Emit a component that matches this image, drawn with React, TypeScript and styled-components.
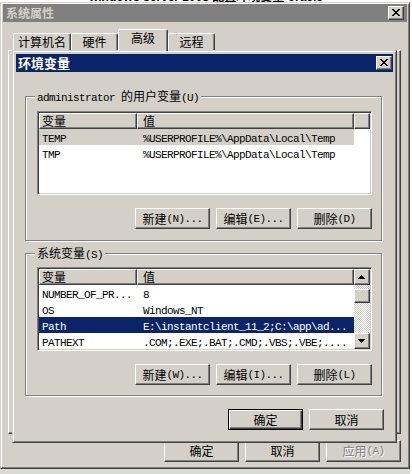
import React from "react";
import styled, { createGlobalStyle, css } from "styled-components";

const FACE = "#d4d0c8";
const SHADOW = "#808080";
const DARK = "#404040";
const NAVY = "#0a246a";

const Global = createGlobalStyle`
  html, body { margin: 0; padding: 0; background: #fff; }
  body {
    font-family: "Noto Sans CJK SC", "Noto Sans", sans-serif;
    font-size: 12px;
    color: #000;
  }
  * { box-sizing: border-box; }
`;

const raisedBevel = css`
  border: 1px solid;
  border-color: #fff ${DARK} ${DARK} #fff;
  box-shadow: inset -1px -1px ${SHADOW};
`;

const Mono = styled.span`
  font-family: "Liberation Mono", monospace;
  font-size: 11px;
  letter-spacing: -0.6px;
  white-space: pre;
`;

const Cjk = styled.span`
  font-family: "Noto Sans CJK SC", sans-serif;
  white-space: pre;
`;

function T({ s }: { s: string }) {
  const parts = s.match(/[\x00-\x7f]+|[^\x00-\x7f]+/g) || [];
  return (
    <>
      {parts.map((p, i) =>
        /^[\x00-\x7f]/.test(p) ? <Mono key={i}>{p}</Mono> : <Cjk key={i}>{p}</Cjk>
      )}
    </>
  );
}

const Desktop = styled.div`
  position: relative;
  width: 412px;
  height: 474px;
  overflow: hidden;
  display: flex;
  flex-direction: column;
  background: #fff;
`;

const TopStrip = styled.div`
  flex: none;
  height: 2px;
  overflow: hidden;
  display: flex;
  justify-content: center;
`;

const StripText = styled.div`
  margin-top: -9px;
  font: bold 12px/13px "Liberation Sans", "Noto Sans CJK SC", sans-serif;
  white-space: nowrap;
`;

const BottomStrip = styled.div`
  flex: 1;
  background: #d8dad2;
  width: 410px;
`;

const OuterWindow = styled.div`
  flex: none;
  width: 410px;
  height: 467px;
  display: flex;
  flex-direction: column;
  background: ${FACE};
  border: 1px solid;
  border-color: ${FACE} ${DARK} ${DARK} ${FACE};
  box-shadow: inset 1px 1px #fff, inset -1px -1px ${SHADOW};
  padding: 1px 2px 2px 2px;
`;

const TitleBar = styled.div<{ $active?: boolean }>`
  flex: none;
  height: 18px;
  display: flex;
  align-items: center;
  justify-content: space-between;
  padding: 0 ${(p) => (p.$active ? 1 : 3)}px 0 ${(p) => (p.$active ? 2 : 3)}px;
  background: ${(p) => (p.$active ? NAVY : SHADOW)};
  color: ${(p) => (p.$active ? "#fff" : FACE)};
`;

const TitleText = styled.span<{ $size: number }>`
  font-weight: 700;
  font-size: ${(p) => p.$size}px;
  line-height: 18px;
  white-space: nowrap;
`;

const CloseBtn = styled.div`
  width: 16px;
  height: 14px;
  background: ${FACE};
  ${raisedBevel};
  display: flex;
  align-items: center;
  justify-content: center;
  padding: 0 1px 1px 0;
`;

const XPIX: [number, number][] = [
  [0, 0], [1, 0], [6, 0], [7, 0],
  [1, 1], [2, 1], [5, 1], [6, 1],
  [2, 2], [3, 2], [4, 2], [5, 2],
  [3, 3], [4, 3],
  [2, 4], [3, 4], [4, 4], [5, 4],
  [1, 5], [2, 5], [5, 5], [6, 5],
  [0, 6], [1, 6], [6, 6], [7, 6],
];

function CloseGlyph() {
  return (
    <svg width="8" height="7" viewBox="0 0 8 7" shapeRendering="crispEdges">
      {XPIX.map(([x, y], i) => (
        <rect key={i} x={x} y={y} width="1" height="1" fill="#000" />
      ))}
    </svg>
  );
}

const OuterBody = styled.div`
  flex: 1;
  display: flex;
  flex-direction: column;
  padding: 7px 6px 4px 5px;
`;

const TabRow = styled.div`
  flex: none;
  height: 21px;
  display: flex;
  align-items: flex-end;
  padding-left: 5px;
`;

const Tab = styled.div<{ $w: number; $active?: boolean }>`
  position: relative;
  z-index: ${(p) => (p.$active ? 1 : 0)};
  width: ${(p) => p.$w}px;
  height: ${(p) => (p.$active ? 22 : 17)}px;
  margin-bottom: ${(p) => (p.$active ? -1 : 0)}px;
  background: ${FACE};
  border-top: 1px solid #fff;
  border-left: 1px solid #fff;
  border-right: 1px solid ${DARK};
  box-shadow: inset -1px 0 ${SHADOW};
  border-radius: 2px 2px 0 0;
  display: flex;
  justify-content: center;
  padding-top: 2px;
  line-height: 12px;
  font-size: 12px;
`;

const TabPanel = styled.div`
  flex: 1;
  background: ${FACE};
  ${raisedBevel};
`;

const ButtonRow = styled.div<{ $mt: number; $mr?: number }>`
  flex: none;
  display: flex;
  justify-content: flex-end;
  gap: 6px;
  margin-top: ${(p) => p.$mt}px;
  margin-right: ${(p) => p.$mr ?? 0}px;
`;

const Btn = styled.div<{ $h: number; $default?: boolean; $disabled?: boolean }>`
  width: 75px;
  height: ${(p) => p.$h}px;
  display: flex;
  align-items: center;
  justify-content: center;
  background: ${FACE};
  font-size: 12px;
  line-height: 12px;
  white-space: pre;
  color: ${(p) => (p.$disabled ? SHADOW : "#000")};
  text-shadow: ${(p) => (p.$disabled ? "1px 1px #fff" : "none")};
  ${(p) =>
    p.$default
      ? css`
          border: 1px solid #000;
          box-shadow: inset 1px 1px #fff, inset -1px -1px ${DARK},
            inset -2px -2px ${SHADOW};
        `
      : raisedBevel};
`;

const Dialog = styled.div`
  position: absolute;
  left: 12px;
  top: 50px;
  width: 385px;
  height: 393px;
  display: flex;
  flex-direction: column;
  background: ${FACE};
  border: 1px solid;
  border-color: ${FACE} ${DARK} ${DARK} ${FACE};
  box-shadow: inset 1px 1px #fff, inset -1px -1px ${SHADOW};
  padding: 3px;
`;

const DialogBody = styled.div`
  flex: 1;
  display: flex;
  flex-direction: column;
  padding: 24px 11px 0 9px;
`;

const Group = styled.div<{ $mt: number; $pb: number }>`
  flex: none;
  margin-top: ${(p) => p.$mt}px;
  border: 1px solid ${SHADOW};
  box-shadow: inset 1px 1px #fff, 1px 1px #fff;
  padding: 0 9px ${(p) => p.$pb}px 11px;
  display: flex;
  flex-direction: column;
`;

const GroupLabel = styled.div`
  align-self: flex-start;
  margin: -7px 0 0 -2px;
  padding: 0 2px;
  height: 12px;
  line-height: 12px;
  background: ${FACE};
  white-space: pre;
`;

const ListBox = styled.div<{ $mt: number }>`
  flex: none;
  margin-top: ${(p) => p.$mt}px;
  height: 84px;
  background: #fff;
  border: 1px solid;
  border-color: ${SHADOW} #fff #fff ${SHADOW};
  box-shadow: inset 1px 1px ${DARK}, inset -1px -1px ${FACE};
  padding: 1px;
  display: flex;
`;

const ListMain = styled.div`
  flex: 1;
  display: flex;
  flex-direction: column;
  overflow: hidden;
`;

const HeaderRow = styled.div`
  flex: none;
  height: 16px;
  display: flex;
`;

const HeaderCell = styled.div<{ $w?: number; $pl?: number }>`
  ${(p) => (p.$w ? `width: ${p.$w}px; flex: none;` : "flex: 1;")}
  height: 16px;
  background: ${FACE};
  border: 1px solid;
  border-color: #fff ${DARK} ${DARK} #fff;
  box-shadow: inset -1px -1px ${SHADOW};
  padding-left: ${(p) => (p.$pl ?? 2) - 1}px;
  line-height: 13px;
  font-size: 12px;
  white-space: pre;
  overflow: hidden;
`;

const Row = styled.div<{ $sel?: "active" | "inactive" }>`
  flex: none;
  width: 315px;
  height: 16px;
  display: flex;
  background: ${(p) =>
    p.$sel === "active" ? NAVY : p.$sel === "inactive" ? FACE : "transparent"};
  color: ${(p) => (p.$sel === "active" ? "#fff" : "#000")};
`;

const Cell = styled.div<{ $w: number; $pl: number }>`
  width: ${(p) => p.$w}px;
  flex: none;
  padding-left: ${(p) => p.$pl}px;
  line-height: 16px;
  white-space: pre;
  overflow: hidden;
`;

const ScrollBar = styled.div`
  flex: none;
  width: 16px;
  display: flex;
  flex-direction: column;
`;

const ArrowBtn = styled.div`
  flex: none;
  width: 16px;
  height: 16px;
  background: ${FACE};
  ${raisedBevel};
  display: flex;
  align-items: center;
  justify-content: center;
  padding: 0 1px 1px 0;
`;

const Track = styled.div`
  flex: 1;
  display: flex;
  flex-direction: column;
  background-color: #fff;
  background-image: repeating-conic-gradient(${FACE} 0 25%, #fff 0 50%);
  background-size: 2px 2px;
`;

const Thumb = styled.div<{ $top: number; $h: number }>`
  flex: none;
  margin-top: ${(p) => p.$top}px;
  height: ${(p) => p.$h}px;
  background: ${FACE};
  ${raisedBevel};
`;

function Arrow({ dir }: { dir: "up" | "down" }) {
  const pts = dir === "up" ? "3.5,0 7,4 0,4" : "0,0 7,0 3.5,4";
  return (
    <svg width="7" height="4" viewBox="0 0 7 4" shapeRendering="crispEdges">
      <polygon points={pts} fill="#000" />
    </svg>
  );
}

type Var = { name: string; value: string; sel?: "active" | "inactive" };

const userVars: Var[] = [
  { name: "TEMP", value: "%USERPROFILE%\\AppData\\Local\\Temp", sel: "inactive" },
  { name: "TMP", value: "%USERPROFILE%\\AppData\\Local\\Temp" },
];

const sysVars: Var[] = [
  { name: "NUMBER_OF_PR...", value: "8" },
  { name: "OS", value: "Windows_NT" },
  { name: "Path", value: "E:\\instantclient_11_2;C:\\app\\ad...", sel: "active" },
  { name: "PATHEXT", value: ".COM;.EXE;.BAT;.CMD;.VBS;.VBE;...." },
];

function VarList({ vars, mt, scroll }: { vars: Var[]; mt: number; scroll?: boolean }) {
  return (
    <ListBox $mt={mt}>
      <ListMain>
        <HeaderRow>
          <HeaderCell $w={98} $pl={3}>变量</HeaderCell>
          <HeaderCell $w={217} $pl={6}>值</HeaderCell>
          {!scroll && <HeaderCell />}
        </HeaderRow>
        {vars.map((v) => (
          <Row key={v.name} $sel={v.sel}>
            <Cell $w={98} $pl={3}><T s={v.name} /></Cell>
            <Cell $w={217} $pl={6}><T s={v.value} /></Cell>
          </Row>
        ))}
      </ListMain>
      {scroll && (
        <ScrollBar>
          <ArrowBtn><Arrow dir="up" /></ArrowBtn>
          <Track>
            <Thumb $top={4} $h={14} />
          </Track>
          <ArrowBtn><Arrow dir="down" /></ArrowBtn>
        </ScrollBar>
      )}
    </ListBox>
  );
}

export default function App() {
  return (
    <>
      <Global />
      <Desktop>
        <TopStrip>
          <StripText>windows server 2008 配置环境变量 oracle</StripText>
        </TopStrip>
        <OuterWindow>
          <TitleBar>
            <TitleText $size={12}>系统属性</TitleText>
            <CloseBtn><CloseGlyph /></CloseBtn>
          </TitleBar>
          <OuterBody>
            <TabRow>
              <Tab $w={58}>计算机名</Tab>
              <Tab $w={47}>硬件</Tab>
              <Tab $w={50} $active>高级</Tab>
              <Tab $w={47}>远程</Tab>
            </TabRow>
            <TabPanel />
            <ButtonRow $mt={6}>
              <Btn $h={22}>确定</Btn>
              <Btn $h={22}>取消</Btn>
              <Btn $h={22} $disabled><T s="应用(A)" /></Btn>
            </ButtonRow>
          </OuterBody>
        </OuterWindow>
        <BottomStrip />

        <Dialog>
          <TitleBar $active>
            <TitleText $size={13}>环境变量</TitleText>
            <CloseBtn><CloseGlyph /></CloseBtn>
          </TitleBar>
          <DialogBody>
            <Group $mt={0} $pb={11}>
              <GroupLabel><T s="administrator 的用户变量(U)" /></GroupLabel>
              <VarList vars={userVars} mt={9} />
              <ButtonRow $mt={13}>
                <Btn $h={21}><T s="新建(N)..." /></Btn>
                <Btn $h={21}><T s="编辑(E)..." /></Btn>
                <Btn $h={21}><T s="删除(D)" /></Btn>
              </ButtonRow>
            </Group>
            <Group $mt={12} $pb={10}>
              <GroupLabel><T s="系统变量(S)" /></GroupLabel>
              <VarList vars={sysVars} mt={8} scroll />
              <ButtonRow $mt={13}>
                <Btn $h={21}><T s="新建(W)..." /></Btn>
                <Btn $h={21}><T s="编辑(I)..." /></Btn>
                <Btn $h={21}><T s="删除(L)" /></Btn>
              </ButtonRow>
            </Group>
            <ButtonRow $mt={13} $mr={-2}>
              <Btn $h={21} $default>确定</Btn>
              <Btn $h={21}>取消</Btn>
            </ButtonRow>
          </DialogBody>
        </Dialog>
      </Desktop>
    </>
  );
}
